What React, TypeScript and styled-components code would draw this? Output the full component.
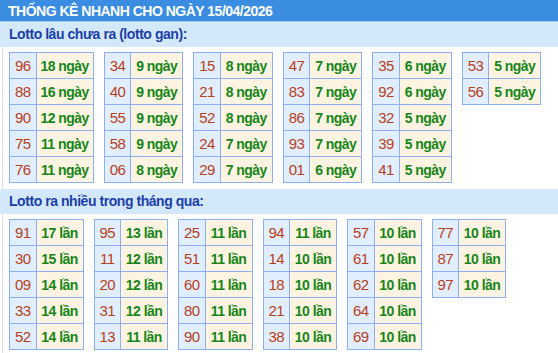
import React from "react";
import styled, { createGlobalStyle } from "styled-components";

const GlobalStyle = createGlobalStyle`
  html, body {
    margin: 0;
    padding: 0;
    background: #ffffff;
    font-family: "Liberation Sans", Arial, sans-serif;
  }
`;

const Wrapper = styled.div`
  width: 558px;
`;

const TopBar = styled.div`
  height: 22px;
  line-height: 22px;
  padding-left: 8px;
  background: #3a8de0;
  color: #ffffff;
  font-size: 14px;
  font-weight: bold;
  letter-spacing: -0.5px;
  border-bottom: 1px solid #a9ccf0;
  box-sizing: border-box;
`;

const SectionTitle = styled.div`
  height: 25px;
  line-height: 25px;
  padding-left: 9px;
  background: #d4e8fc;
  color: #1b3fa6;
  font-size: 14px;
  font-weight: bold;
  letter-spacing: -0.45px;
`;

const Tables = styled.div<{ $bottom: number }>`
  display: flex;
  flex-wrap: wrap;
  align-items: flex-start;
  gap: 10px;
  margin-left: 2px;
  border-left: 1px solid #dedede;
  padding: 5px 0 ${(p) => p.$bottom}px 6px;
`;

const Table = styled.table`
  border-collapse: collapse;
  border-spacing: 0;
  border: 1px solid #8eaff2;
`;

const NumCell = styled.td`
  height: 25px;
  padding: 0 5px;
  border: 1px solid #8eaff2;
  background: #e1eeff;
  color: #b8401c;
  font-size: 15px;
  letter-spacing: -0.6px;
  text-align: center;
`;

const ValCell = styled.td<{ $min: number }>`
  height: 25px;
  min-width: ${(p) => p.$min}px;
  padding: 0 4px;
  border: 1px solid #8eaff2;
  background: #fff3e1;
  color: #16861a;
  font-size: 14px;
  font-weight: bold;
  letter-spacing: -0.55px;
  text-align: center;
  white-space: nowrap;
`;

type Item = [string, number];

const gan: Item[][] = [
  [["96", 18], ["88", 16], ["90", 12], ["75", 11], ["76", 11]],
  [["34", 9], ["40", 9], ["55", 9], ["58", 9], ["06", 8]],
  [["15", 8], ["21", 8], ["52", 8], ["24", 7], ["29", 7]],
  [["47", 7], ["83", 7], ["86", 7], ["93", 7], ["01", 6]],
  [["35", 6], ["92", 6], ["32", 5], ["39", 5], ["41", 5]],
  [["53", 5], ["56", 5]],
];

const nhieu: Item[][] = [
  [["91", 17], ["30", 15], ["09", 14], ["33", 14], ["52", 14]],
  [["95", 13], ["11", 12], ["20", 12], ["31", 12], ["13", 11]],
  [["25", 11], ["51", 11], ["60", 11], ["80", 11], ["90", 11]],
  [["94", 11], ["14", 10], ["18", 10], ["21", 10], ["38", 10]],
  [["57", 10], ["61", 10], ["62", 10], ["64", 10], ["69", 10]],
  [["77", 10], ["87", 10], ["97", 10]],
];

const StatTable = ({
  rows,
  unit,
  min,
}: {
  rows: Item[];
  unit: string;
  min: number;
}) => (
  <Table>
    <tbody>
      {rows.map(([num, count]) => (
        <tr key={num}>
          <NumCell>{num}</NumCell>
          <ValCell $min={min}>
            {count} {unit}
          </ValCell>
        </tr>
      ))}
    </tbody>
  </Table>
);

export default function App() {
  return (
    <Wrapper>
      <GlobalStyle />
      <TopBar>THỐNG KÊ NHANH CHO NGÀY 15/04/2026</TopBar>
      <SectionTitle>Lotto lâu chưa ra (lotto gan):</SectionTitle>
      <Tables $bottom={6}>
        {gan.map((rows, i) => (
          <StatTable key={i} rows={rows} unit="ngày" min={43} />
        ))}
      </Tables>
      <SectionTitle>Lotto ra nhiều trong tháng qua:</SectionTitle>
      <Tables $bottom={5}>
        {nhieu.map((rows, i) => (
          <StatTable key={i} rows={rows} unit="lần" min={38} />
        ))}
      </Tables>
    </Wrapper>
  );
}
